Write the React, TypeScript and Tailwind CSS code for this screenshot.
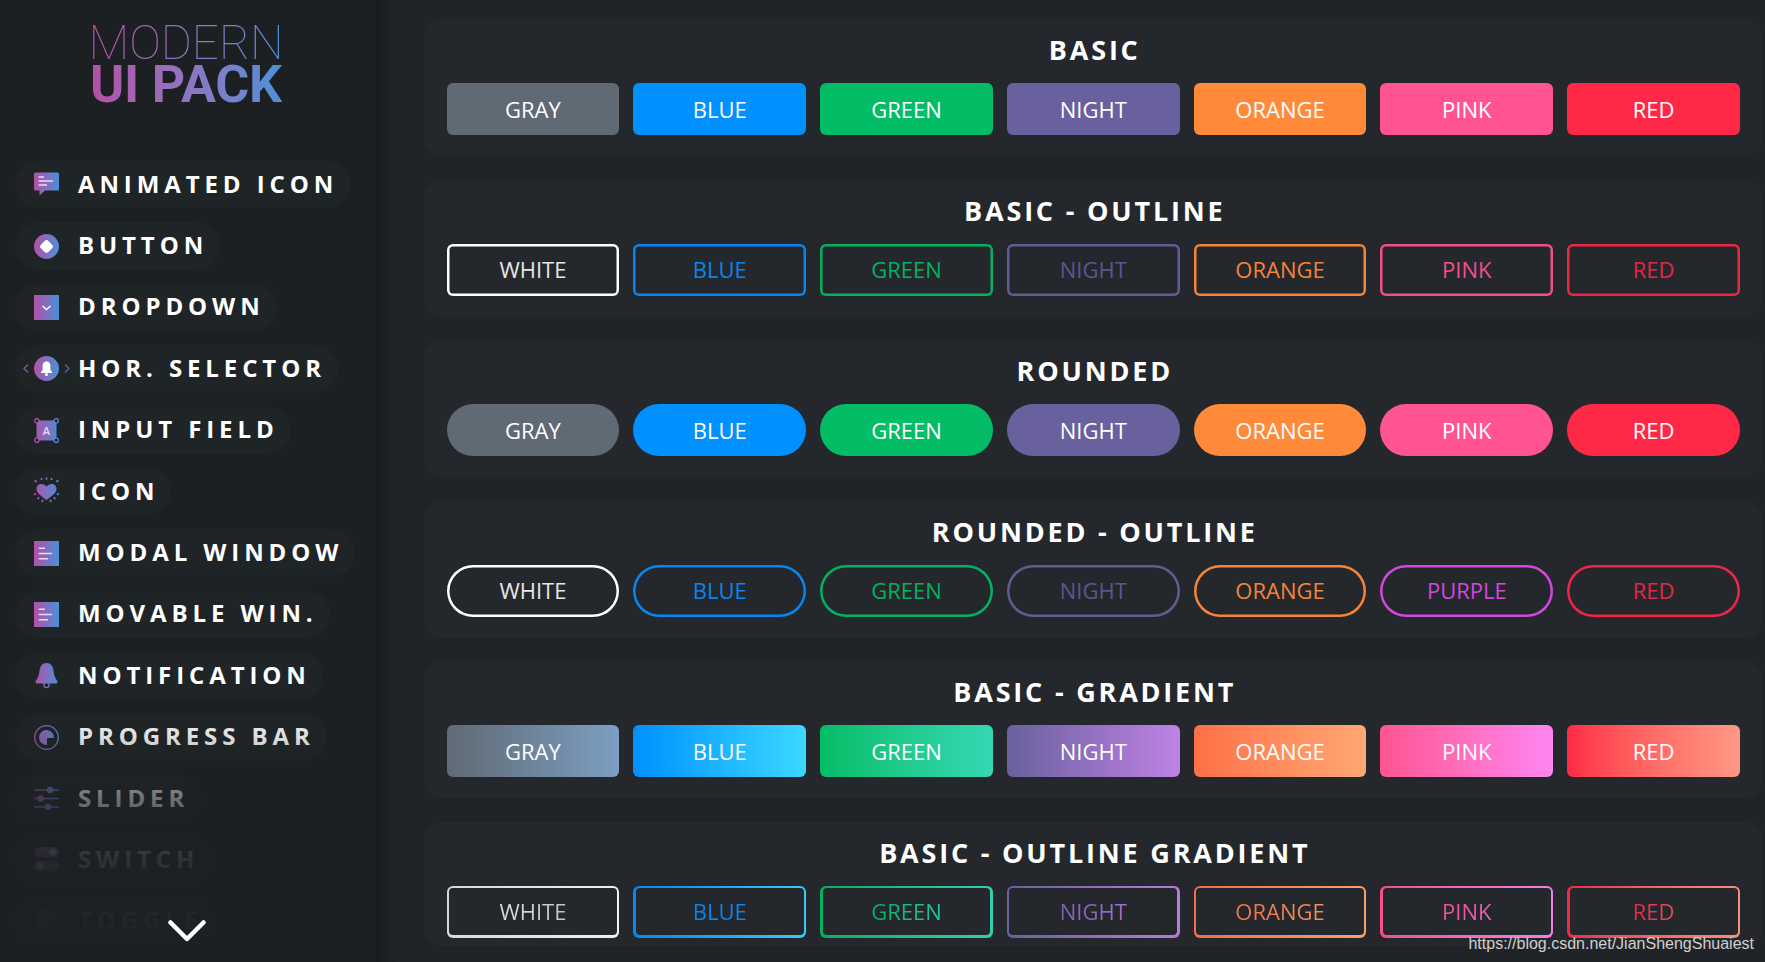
import React from 'react'

const colors = {
  gray: { solid: 'bg-[#5f6a74]', grad: 'from-[#5f6a74] to-[#7d9fc3]', line: 'shadow-[inset_0_0_0_2.5px_#ffffff] text-[#e6e6e6]', gradText: 'from-[#dcdcdc] to-[#c4c4c4]', gradLine: 'from-[#d8d8d8] to-[#f0f0f0]' },
  blue: { solid: 'bg-[#0090ff]', grad: 'from-[#0090ff] to-[#3bd8ff]', line: 'shadow-[inset_0_0_0_2.5px_#0a85ef] text-[#0a85ef]', gradText: 'from-[#0a85ef] to-[#0a85ef]', gradLine: 'from-[#0a85ef] to-[#35cdf2]' },
  green: { solid: 'bg-[#02bd65]', grad: 'from-[#02bd65] to-[#35d8b4]', line: 'shadow-[inset_0_0_0_2.5px_#03b160] text-[#03b160]', gradText: 'from-[#03b160] to-[#25c69e]', gradLine: 'from-[#03b160] to-[#30cfae]' },
  night: { solid: 'bg-[#69619e]', grad: 'from-[#69619e] to-[#bf82e6]', line: 'shadow-[inset_0_0_0_2.5px_#625b94] text-[#5c5590]', gradText: 'from-[#7a5fb0] to-[#a36fd0]', gradLine: 'from-[#69619e] to-[#b67cdc]' },
  orange: { solid: 'bg-[#ff8a3a]', grad: 'from-[#ff6f47] to-[#ffa873]', line: 'shadow-[inset_0_0_0_2.5px_#f58438] text-[#f58438]', gradText: 'from-[#f0704a] to-[#f09060]', gradLine: 'from-[#f26e45] to-[#f5a06a]' },
  pink: { solid: 'bg-[#ff5491]', grad: 'from-[#ff5491] to-[#ff85f0]', line: 'shadow-[inset_0_0_0_2.5px_#f34f8b] text-[#f34f8b]', gradText: 'from-[#ef5095] to-[#e860b8]', gradLine: 'from-[#f34f8b] to-[#f07fe5]' },
  red: { solid: 'bg-[#ff2847]', grad: 'from-[#ff2847] to-[#ff9886]', line: 'shadow-[inset_0_0_0_2.5px_#ee2744] text-[#e82643]', gradText: 'from-[#e82643] to-[#e84a55]', gradLine: 'from-[#f02745] to-[#f58f7e]' },
}

type ColorName = keyof typeof colors
type Kind = 'solid' | 'line' | 'grad' | 'gradLine'

const basicNames: [ColorName, string][] = [
  ['gray', 'GRAY'], ['blue', 'BLUE'], ['green', 'GREEN'], ['night', 'NIGHT'], ['orange', 'ORANGE'], ['pink', 'PINK'], ['red', 'RED'],
]
const outlineNames: [ColorName, string][] = [
  ['gray', 'WHITE'], ['blue', 'BLUE'], ['green', 'GREEN'], ['night', 'NIGHT'], ['orange', 'ORANGE'], ['pink', 'PINK'], ['red', 'RED'],
]

const UiButton = ({ color, label, kind, round }: { color: ColorName; label: string; kind: Kind; round?: boolean }) => {
  const c = colors[color]
  const radius = round ? 'rounded-full' : 'rounded-[6px]'
  const base = 'h-[52px] flex items-center justify-center text-[22px] font-medium'

  if (kind === 'solid') return <div className={`${base} ${radius} ${c.solid} text-white`}>{label}</div>
  if (kind === 'grad') return <div className={`${base} ${radius} bg-linear-to-r ${c.grad} text-white`}>{label}</div>
  if (kind === 'line') return <div className={`${base} ${radius} ${c.line}`}>{label}</div>

  return (
    <div className={`rounded-[6px] p-[2.5px] bg-linear-to-r ${c.gradLine}`}>
      <div className="h-[47px] rounded-[4px] bg-[#24282c] flex items-center justify-center text-[22px] font-medium">
        <span className={`bg-linear-to-r ${c.gradText} bg-clip-text text-transparent`}>{label}</span>
      </div>
    </div>
  )
}

const Section = ({ title, short, children }: { title: string; short?: boolean; children: React.ReactNode }) => (
  <section className={`rounded-[18px] bg-[#24282c] px-[23px] pt-[12px] ${short ? 'h-[124px]' : 'h-[137px]'}`}>
    <h3 className="pl-[3px] text-center text-white text-[27px] font-bold leading-[38px] tracking-[2.8px] mb-[14px]">{title}</h3>
    <div className="grid grid-cols-7 gap-[14px]">{children}</div>
  </section>
)

const Box = ({ id, children }: { id: string; children: React.ReactNode }) => (
  <svg width="25" height="25" viewBox="0 0 25 25" className="shrink-0 overflow-visible">
    <defs>
      <linearGradient id={id} gradientUnits="userSpaceOnUse" x1="0" y1="0" x2="25" y2="0">
        <stop offset="0" stopColor="#b64fa6" />
        <stop offset="1" stopColor="#4a90d9" />
      </linearGradient>
    </defs>
    {children}
  </svg>
)

const icons: Record<string, React.ReactNode> = {
  chat: (
    <Box id="g-chat">
      <path d="M1.5 0.5H23.5A1.5 1.5 0 0 1 25 2V17A1.5 1.5 0 0 1 23.5 18.5H11L5.5 23.5V18.5H1.5A1.5 1.5 0 0 1 0 17V2A1.5 1.5 0 0 1 1.5 0.5Z" fill="url(#g-chat)" />
      <path d="M4.5 5H10M4.5 9H19M4.5 13H13" stroke="#f0d8f4" strokeWidth="1.5" />
    </Box>
  ),
  button: (
    <Box id="g-btn">
      <circle cx="12.5" cy="12.5" r="12.5" fill="url(#g-btn)" />
      <rect x="7.2" y="7.2" width="10.6" height="10.6" rx="3" fill="#fff" transform="rotate(45 12.5 12.5)" />
    </Box>
  ),
  dropdown: (
    <Box id="g-drop">
      <rect width="25" height="25" fill="url(#g-drop)" />
      <path d="M8.5 11L12.5 14.5L16.5 11" fill="none" stroke="#fff" strokeWidth="1.4" />
    </Box>
  ),
  selector: (
    <Box id="g-sel">
      <path d="M-6 8.5L-10 12.5L-6 16.5" fill="none" stroke="#8a5aa6" strokeWidth="1.2" />
      <path d="M31 8.5L35 12.5L31 16.5" fill="none" stroke="#5a68ae" strokeWidth="1.2" />
      <circle cx="12.5" cy="12.5" r="12.5" fill="url(#g-sel)" />
      <path d="M12.5 5.5C9.6 5.5 8.6 7.8 8.6 10.5V14L7 16V17H18V16L16.4 14V10.5C16.4 7.8 15.4 5.5 12.5 5.5Z" fill="#fff" />
      <circle cx="12.5" cy="18.6" r="1.5" fill="#fff" />
    </Box>
  ),
  input: (
    <Box id="g-input">
      <rect x="2.5" y="2.5" width="20" height="20" fill="url(#g-input)" />
      <circle cx="2.8" cy="2.8" r="2.2" fill="#1f2427" stroke="url(#g-input)" strokeWidth="1.2" />
      <circle cx="22.2" cy="2.8" r="2.2" fill="#1f2427" stroke="url(#g-input)" strokeWidth="1.2" />
      <circle cx="2.8" cy="22.2" r="2.2" fill="#1f2427" stroke="url(#g-input)" strokeWidth="1.2" />
      <circle cx="22.2" cy="22.2" r="2.2" fill="#1f2427" stroke="url(#g-input)" strokeWidth="1.2" />
      <text x="12.5" y="17" textAnchor="middle" fontSize="11" fontWeight="600" fill="#e8d8f0">A</text>
    </Box>
  ),
  heart: (
    <Box id="g-heart">
      <path d="M12.5 21C8 17.5 2.5 14.5 2.5 9.8C2.5 6.7 4.7 5 7.3 5C9.4 5 11.4 6 12.5 7.6C13.6 6 15.6 5 17.7 5C20.3 5 22.5 6.7 22.5 9.8C22.5 14.5 17 17.5 12.5 21Z" fill="url(#g-heart)" />
      <path d="M7.5 -1V1M12.5 -1.5V0.8M17.5 -1V1M0.5 1.5L2.8 2.8M24.5 1.5L22.2 2.8M0 15.5L2.2 14.8M25 15.5L22.8 14.8M3.5 20L5.3 18.3M8 23L8.9 20.8M17 23L16.1 20.8M21.5 20L19.7 18.3" stroke="url(#g-heart)" strokeWidth="1.7" fill="none" />
    </Box>
  ),
  modal: (
    <Box id="g-modal">
      <rect width="25" height="25" fill="url(#g-modal)" />
      <path d="M4.7 7.3H11M4.7 12.5H18M4.7 17.7H14" stroke="#f0d8f4" strokeWidth="1.6" />
    </Box>
  ),
  movable: (
    <Box id="g-mov">
      <rect width="25" height="25" fill="url(#g-mov)" />
      <path d="M4.7 7.3H11M4.7 12.5H18M4.7 17.7H14" stroke="#f0d8f4" strokeWidth="1.6" />
    </Box>
  ),
  bell: (
    <Box id="g-bell">
      <path d="M12.5 0C8 0 6 3.5 5.5 8C5 12 4 15 2 17.5C1.2 18.5 1.5 20.5 3 20.5H22C23.5 20.5 23.8 18.5 23 17.5C21 15 20 12 19.5 8C19 3.5 17 0 12.5 0Z" fill="url(#g-bell)" />
      <circle cx="12.5" cy="22" r="2.6" fill="none" stroke="url(#g-bell)" strokeWidth="1.2" />
    </Box>
  ),
  progress: (
    <Box id="g-prog">
      <circle cx="12.5" cy="12.5" r="11.8" fill="none" stroke="url(#g-prog)" strokeWidth="1.3" />
      <path d="M13 13H20A7.5 7.5 0 1 0 13 20Z" fill="url(#g-prog)" />
    </Box>
  ),
  slider: (
    <Box id="g-slide">
      <path d="M0 4H25M0 12.5H25M0 21H25" stroke="url(#g-slide)" strokeWidth="1.4" />
      <circle cx="16" cy="4" r="3.2" fill="url(#g-slide)" />
      <circle cx="6.5" cy="12.5" r="3.2" fill="url(#g-slide)" />
      <circle cx="14" cy="21" r="3.2" fill="url(#g-slide)" />
    </Box>
  ),
  switch: (
    <Box id="g-sw">
      <rect y="0" width="25" height="11" rx="5.5" fill="url(#g-sw)" />
      <circle cx="19" cy="5.5" r="3.5" fill="#fff" />
      <rect y="13.5" width="25" height="11" rx="5.5" fill="url(#g-sw)" />
      <circle cx="6" cy="19" r="3.5" fill="#fff" />
    </Box>
  ),
  toggle: (
    <Box id="g-tog">
      <circle cx="12.5" cy="12.5" r="12" fill="url(#g-tog)" />
    </Box>
  ),
}

const menu: [string, string][] = [
  ['chat', 'ANIMATED ICON'],
  ['button', 'BUTTON'],
  ['dropdown', 'DROPDOWN'],
  ['selector', 'HOR. SELECTOR'],
  ['input', 'INPUT FIELD'],
  ['heart', 'ICON'],
  ['modal', 'MODAL WINDOW'],
  ['movable', 'MOVABLE WIN.'],
  ['bell', 'NOTIFICATION'],
  ['progress', 'PROGRESS BAR'],
  ['slider', 'SLIDER'],
  ['switch', 'SWITCH'],
  ['toggle', 'TOGGLE'],
]

const App = () => {
  return (
    <div className="relative w-full h-[962px] overflow-hidden flex bg-[#202428] font-['Open_Sans',sans-serif]">
      {/* sidebar */}
      <aside className="relative w-[376px] shrink-0 h-full overflow-hidden bg-[#1c2023] pl-[15px]">
        <div className="w-[342px] flex flex-col items-center pt-[23px] font-['Roboto',sans-serif] h-[161px]">
          <div className="text-[47.5px] font-thin leading-[40px] mb-[1px] bg-linear-to-r from-[#b64fa6] to-[#4a90d9] bg-clip-text text-transparent">MODERN</div>
          <div className="text-[52px] font-bold leading-[42px] tracking-[-0.2px] bg-linear-to-r from-[#b64fa6] to-[#4a90d9] bg-clip-text text-transparent">UI PACK</div>
        </div>
        <nav className="flex flex-col items-start gap-[14px]">
          {menu.map(([icon, label]) => (
            <div key={label} className="h-[47.4px] shrink-0 inline-flex items-center gap-[19px] pl-[19px] pr-[12px] rounded-full bg-[#1f2427]">
              {icons[icon]}
              <span className="pb-[2px] text-white text-[24px] leading-[32px] font-bold tracking-[4.9px] whitespace-nowrap">{label}</span>
            </div>
          ))}
        </nav>
        {/* fade over the list bottom */}
        <div className="absolute left-0 right-0 top-[690px] bottom-0 pointer-events-none bg-[linear-gradient(180deg,rgba(28,32,35,0)_0%,rgba(28,32,35,0.14)_17%,rgba(28,32,35,0.64)_40%,rgba(28,32,35,0.92)_62%,rgba(28,32,35,0.98)_85%,rgba(28,32,35,1)_100%)]" />
        <svg width="38" height="24" viewBox="0 0 38 24" className="absolute left-[168px] top-[919px]">
          <path d="M2.5 3.5L19 20L35.5 3.5" fill="none" stroke="#fff" strokeWidth="4.5" strokeLinecap="round" strokeLinejoin="round" />
        </svg>
      </aside>

      {/* main */}
      <main className="relative flex-1 min-w-0">
        <div className="absolute inset-y-0 left-0 w-[22px] pointer-events-none bg-linear-to-r from-[#191c1f] to-[#202428]" />
        <div className="pl-[47.5px] pr-[2px] pt-[19px] flex flex-col gap-[23.6px]">
          <Section title="BASIC">
            {basicNames.map(([c, l]) => <UiButton key={c} color={c} label={l} kind="solid" />)}
          </Section>
          <Section title="BASIC - OUTLINE">
            {outlineNames.map(([c, l]) => <UiButton key={c} color={c} label={l} kind="line" />)}
          </Section>
          <Section title="ROUNDED">
            {basicNames.map(([c, l]) => <UiButton key={c} color={c} label={l} kind="solid" round />)}
          </Section>
          <Section title="ROUNDED - OUTLINE">
            {outlineNames.map(([c, l]) =>
              c === 'pink' ? (
                <div key={c} className="h-[52px] rounded-full shadow-[inset_0_0_0_2.5px_#d247dc] text-[#d247dc] flex items-center justify-center text-[22px] font-medium">PURPLE</div>
              ) : (
                <UiButton key={c} color={c} label={l} kind="line" round />
              )
            )}
          </Section>
          <Section title="BASIC - GRADIENT">
            {basicNames.map(([c, l]) => <UiButton key={c} color={c} label={l} kind="grad" />)}
          </Section>
          <Section title="BASIC - OUTLINE GRADIENT" short>
            {outlineNames.map(([c, l]) => <UiButton key={c} color={c} label={l} kind="gradLine" />)}
          </Section>
        </div>
      </main>

      {/* csdn watermark */}
      <div className="absolute right-[11px] bottom-[8px] font-['Liberation_Sans',sans-serif] text-[16px] leading-[20px] text-[#cfcfcf]">
        https://blog.csdn.net/JianShengShuaiest
      </div>
    </div>
  )
}

export default App
